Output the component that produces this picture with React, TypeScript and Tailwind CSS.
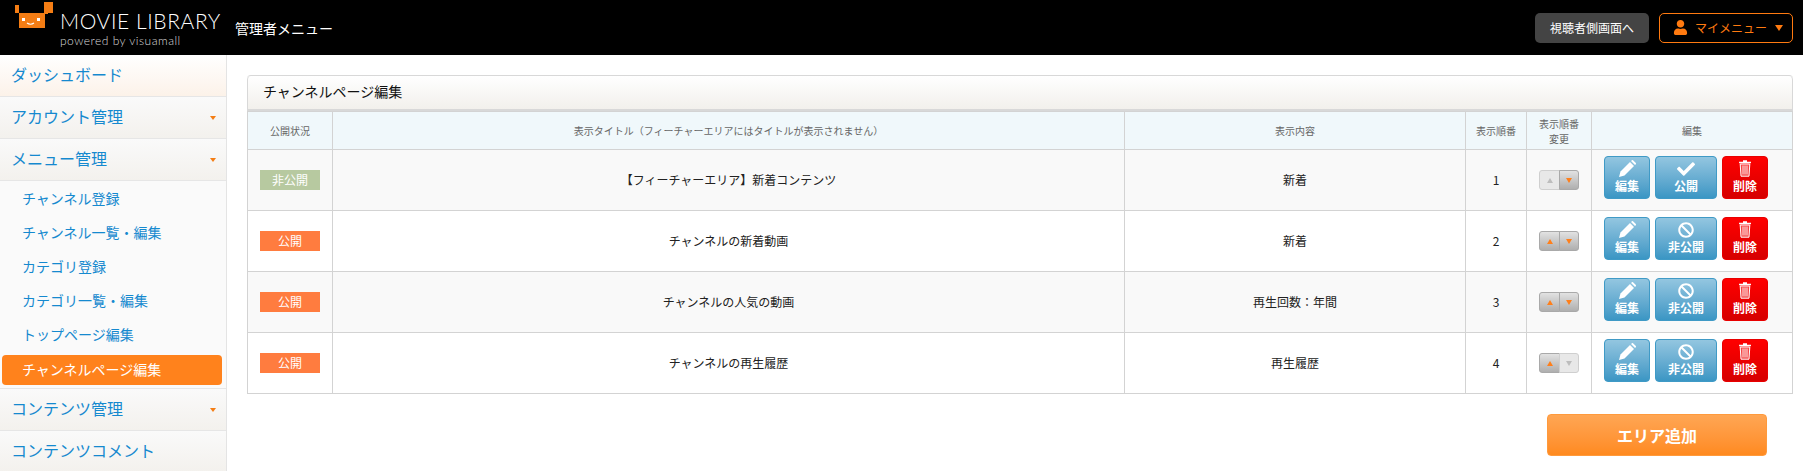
import { FaBan, FaCheck, FaUser } from "react-icons/fa";

const FONT = "font-['Meiryo','Noto_Sans_CJK_JP','Noto_Sans',sans-serif]";

const SUB_MENU = [
	"チャンネル登録",
	"チャンネル一覧・編集",
	"カテゴリ登録",
	"カテゴリ一覧・編集",
	"トップページ編集",
];

const ROWS = [
	{ published: false, title: "【フィーチャーエリア】新着コンテンツ", content: "新着", order: 1, up: false, down: true },
	{ published: true, title: "チャンネルの新着動画", content: "新着", order: 2, up: true, down: true },
	{ published: true, title: "チャンネルの人気の動画", content: "再生回数：年間", order: 3, up: true, down: true },
	{ published: true, title: "チャンネルの再生履歴", content: "再生履歴", order: 4, up: true, down: false },
];

function Logo() {
	return (
		<svg width="40" height="28" viewBox="0 0 40 28" className="mt-[2px] shrink-0 self-start">
			<path d="M0 3h4v8H0zM29 0h9v11h-5v1h-4z" fill="#f47d14" />
			<rect x="4" y="11" width="26" height="15" fill="#f47d14" />
			<rect x="7" y="16" width="3" height="3" fill="#fff" />
			<rect x="22" y="16" width="3" height="3" fill="#fff" />
			<path d="M12 21q3.500 2.500 7 0" stroke="#fff" strokeWidth="1.2" fill="none" />
		</svg>
	);
}

function PencilIcon() {
	return (
		<svg width="17" height="17" viewBox="0 0 17 17" fill="#fff">
			<path d="M0 17l1.500-5.500L11 2l4 4-9.500 9.500z" />
			<path d="M12 1l.6-.6a1.200 1.200 0 0 1 1.700 0l2.300 2.300a1.200 1.200 0 0 1 0 1.700l-.6.600z" />
		</svg>
	);
}

function TrashIcon() {
	return (
		<svg width="12" height="17" viewBox="0 0 12 17" fill="none" stroke="#fff">
			<path d="M4 1h4M0 2.500h12" strokeWidth="1.400" />
			<path d="M1.200 4l.8 12.200h8L10.800 4z" strokeWidth="1" fill="#ffc4c4" fillOpacity="0.35" />
			<path d="M4 5.500v9M6 5.500v9M8 5.500v9" strokeWidth="0.900" />
		</svg>
	);
}

function SideItem({ label, caret, top }: { label: string; caret?: boolean; top?: boolean }) {
	return (
		<div
			className={`flex h-[42px] shrink-0 items-center justify-between border-b border-[#e6e6e6] pr-[10px] pb-[3px] pl-[11px] text-base text-[#1589cf] ${
				top ? "bg-gradient-to-b from-white to-[#fcf2e9]" : "bg-gradient-to-b from-[#fafafa] to-[#f3f1ed]"
			}`}
		>
			<span>{label}</span>
			{caret && <span className="mt-[3px] block h-0 w-0 border-x-[3px] border-t-[4px] border-x-transparent border-t-[#f47d14]" />}
		</div>
	);
}

function Sidebar() {
	return (
		<aside className="flex w-[227px] shrink-0 flex-col border-r border-[#e4e4e4] bg-[#fafafa]">
			<SideItem label="ダッシュボード" top />
			<SideItem label="アカウント管理" caret />
			<SideItem label="メニュー管理" caret />
			<div className="flex flex-col border-b border-[#e6e6e6] pb-[3px]">
				{SUB_MENU.map((label) => (
					<div key={label} className="flex h-[34px] items-center pl-[22px] text-sm text-[#1589cf]">
						{label}
					</div>
				))}
				<div className="mx-[2px] mt-[4px] flex h-[30px] w-[220px] items-center rounded-[4px] bg-[#ff821c] pb-[3px] pl-[20px] text-sm text-white">
					チャンネルページ編集
				</div>
			</div>
			<SideItem label="コンテンツ管理" caret />
			<SideItem label="コンテンツコメント" />
		</aside>
	);
}

function ActionButton({ icon, label, wide, red }: { icon: React.ReactNode; label: string; wide?: boolean; red?: boolean }) {
	return (
		<button
			className={`flex h-[43px] flex-col items-center rounded-[4px] border pt-[1px] text-xs leading-[14px] font-bold text-white ${
				wide ? "w-[62px]" : "w-[46px]"
			} ${
				red
					? "border-[#e80000] bg-gradient-to-b from-[#ff0000] to-[#d60000]"
					: "border-[#3f9ac6] bg-gradient-to-b from-[#93c6e0] to-[#3a96c4]"
			}`}
		>
			<span className="flex h-[21px] items-center justify-center">{icon}</span>
			<span>{label}</span>
		</button>
	);
}

function SortButtons({ up, down }: { up: boolean; down: boolean }) {
	const on = "border-[#a9a9a9] bg-gradient-to-b from-[#e2e2e2] to-[#afafaf]";
	const off = "border-[#cfcfcf] bg-[#e8e8e8]";
	return (
		<div className="mx-auto flex h-[20px] w-[40px]">
			<span className={`flex w-[21px] items-center justify-center rounded-l-[3px] border ${up ? on : off}`}>
				<span className={`block h-0 w-0 border-x-[3px] border-b-[5px] border-x-transparent ${up ? "border-b-[#ff7f1a]" : "border-b-[#bdbdbd]"}`} />
			</span>
			<span className={`-ml-px flex w-[20px] items-center justify-center rounded-r-[3px] border ${down ? on : off}`}>
				<span className={`block h-0 w-0 border-x-[3px] border-t-[5px] border-x-transparent ${down ? "border-t-[#ff7f1a]" : "border-t-[#bdbdbd]"}`} />
			</span>
		</div>
	);
}

function ChannelTable() {
	const th = "border border-[#d3d3d3] px-1 text-center text-[10px] leading-[15px] font-normal text-[#666]";
	const td = "border border-[#d3d3d3] text-center text-xs text-[#222]";
	return (
		<table className="w-full table-fixed border-collapse">
			<colgroup>
				<col className="w-[85px]" />
				<col className="w-[792px]" />
				<col className="w-[341px]" />
				<col className="w-[61px]" />
				<col className="w-[65px]" />
				<col />
			</colgroup>
			<thead>
				<tr className="h-[38px] bg-[#f0f8fb]">
					<th className={th}>公開状況</th>
					<th className={th}>表示タイトル（フィーチャーエリアにはタイトルが表示されません）</th>
					<th className={th}>表示内容</th>
					<th className={th}>表示順番</th>
					<th className={th}>
						表示順番
						<br />
						変更
					</th>
					<th className={th}>編集</th>
				</tr>
			</thead>
			<tbody>
				{ROWS.map((row, i) => (
					<tr key={row.order} className={`h-[61px] ${i % 2 === 0 ? "bg-[#f9f9f9]" : "bg-white"}`}>
						<td className={td}>
							<span
								className={`mx-auto flex h-[20px] w-[60px] items-center justify-center text-xs text-white ${
									row.published ? "bg-[#ff7c3f]" : "bg-[#b7c9a0]"
								}`}
							>
								{row.published ? "公開" : "非公開"}
							</span>
						</td>
						<td className={td}>{row.title}</td>
						<td className={td}>{row.content}</td>
						<td className={td}>{row.order}</td>
						<td className={td}>
							<SortButtons up={row.up} down={row.down} />
						</td>
						<td className={td}>
							<div className="mb-[5px] flex gap-[5px] pl-3">
								<ActionButton icon={<PencilIcon />} label="編集" />
								{row.published ? (
									<ActionButton icon={<FaBan className="text-[16px]" />} label="非公開" wide />
								) : (
									<ActionButton icon={<FaCheck className="text-[18px]" />} label="公開" wide />
								)}
								<ActionButton icon={<TrashIcon />} label="削除" red />
							</div>
						</td>
					</tr>
				))}
			</tbody>
		</table>
	);
}

export default function App() {
	return (
		<div className={`flex h-screen flex-col overflow-hidden bg-white ${FONT}`}>
			<header className="flex h-[55px] shrink-0 items-center justify-between bg-black pr-[10px] pl-[15px]">
				<div className="flex h-full items-center">
					<Logo />
					<div className="ml-[5px] flex w-[175px] flex-col text-white">
						<span className="font-['Lato'] text-[21px] leading-[26px] font-light tracking-[0.6px]">MOVIE LIBRARY</span>
						<span className="font-['Lato'] text-[12px] leading-[14px] font-light tracking-[0.5px] text-[#ddd]">powered by visuamall</span>
					</div>
					<span className="text-sm text-white">管理者メニュー</span>
				</div>
				<div className="flex items-center gap-[10px]">
					<button className="h-[30px] w-[114px] rounded-[5px] bg-[#444] text-xs text-white">視聴者側画面へ</button>
					<button className="flex h-[30px] w-[134px] items-center rounded-[5px] border border-[#ff7a10] pr-[9px] pl-[13px] text-xs text-[#ff7a10]">
						<FaUser className="text-[15px]" />
						<span className="ml-[7px] flex-1 text-left">マイメニュー</span>
						<span className="block h-0 w-0 border-x-[4px] border-t-[6px] border-x-transparent border-t-[#ff7a10]" />
					</button>
				</div>
			</header>
			<div className="flex min-h-0 flex-1">
				<Sidebar />
				<main className="flex-1 pt-5 pr-[10px] pl-5">
					<section className="overflow-hidden rounded-t-[4px] border-t border-[#d8d8d8]">
						<h2 className="flex h-[35px] items-center rounded-t-[4px] border-x border-b-2 border-[#d8d8d8] bg-gradient-to-b from-white to-[#f2f0ec] pb-[3px] pl-[15px] text-sm font-normal text-[#111]">
							チャンネルページ編集
						</h2>
						<ChannelTable />
					</section>
					<div className="mt-5 flex justify-end pr-[26px]">
						<button className="h-[42px] w-[220px] rounded-[4px] border border-[#ff9a3c] bg-gradient-to-b from-[#ffa653] to-[#ff8a1e] text-base font-bold text-white">
							エリア追加
						</button>
					</div>
				</main>
			</div>
		</div>
	);
}
